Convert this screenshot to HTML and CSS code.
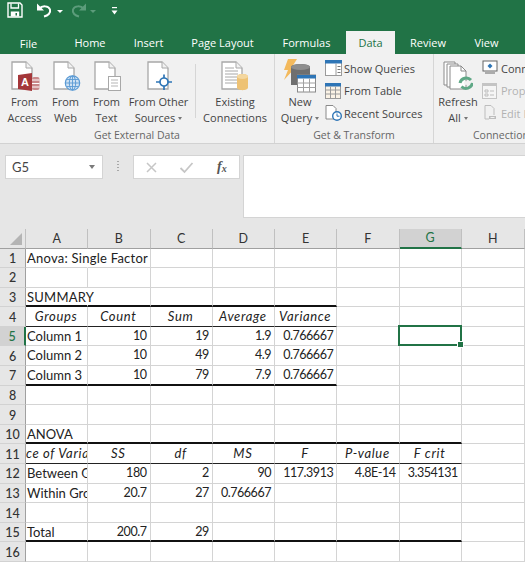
FILE: index.html
```html
<!DOCTYPE html>
<html lang="en">
<head>
<meta charset="utf-8">
<title>Anova: Single Factor</title>
<link rel="stylesheet" href="styles.css">
</head>
<body>
<div class="app">
<header class="top">
  <div class="qat">
    <svg class="q-save" width="16" height="16" viewBox="0 0 16 16"><path d="M1 1H13L15 3V15H1Z" fill="none" stroke="#fff" stroke-width="1.4"/><path d="M4 1.5V6H11.5V1.5" fill="none" stroke="#fff" stroke-width="1.3"/><rect x="3.8" y="9.5" width="8.4" height="5" fill="#fff"/><rect x="8.5" y="11" width="1.5" height="2.5" fill="#217346"/></svg>
    <svg class="q-undo" width="16" height="16" viewBox="0 0 16 16"><path d="M3.5 6.5C6 3.5 12.5 3.5 14 7.5C15 11 12 13.5 8 14.5" fill="none" stroke="#fff" stroke-width="2"/><path d="M1 1.5V8.5H8Z" fill="#fff"/></svg>
    <span class="q-caret"></span>
    <svg class="q-redo" width="16" height="16" viewBox="0 0 16 16"><path d="M12.5 6.5C10 3.5 3.5 3.5 2 7.5C1 11 4 13.5 8 14.5" fill="none" stroke="#5c9c7b" stroke-width="2"/><path d="M15 1.5V8.5H8Z" fill="#5c9c7b"/></svg>
    <span class="q-caret dim"></span>
    <svg class="q-more" width="7" height="8" viewBox="0 0 7 8"><rect x="1" y="0" width="5" height="1.2" fill="#fff"/><path d="M0.5 3.5H6.5L3.5 7.5Z" fill="#fff"/></svg>
  </div>
  <nav class="tabs">
    <span class="tab t-file">File</span>
    <span class="tab t-home">Home</span>
    <span class="tab t-insert">Insert</span>
    <span class="tab t-page">Page Layout</span>
    <span class="tab t-form">Formulas</span>
    <span class="tab t-data">Data</span>
    <span class="tab t-review">Review</span>
    <span class="tab t-view">View</span>
  </nav>
</header>

<section class="ribbon">
  <div class="group g-ext">
    <div class="items">
      <div class="big w41"><svg width="30" height="30" viewBox="0 0 30 30"><path d="M2 1H16L22 7V28H2Z" fill="#fff" stroke="#a8a8a8" stroke-width="1.3"/><path d="M16 1V7H22" fill="#f2f2f2" stroke="#a8a8a8"/><rect x="22" y="16" width="7.5" height="13" rx="2" fill="#c9888a"/><path d="M22 19H29.5M22 22.5H29.5M22 26H29.5" stroke="#fff" stroke-width="1"/><path d="M8 14L22 12V30L8 28Z" fill="#a4373a"/><text x="11" y="25" class="ic-a">A</text></svg><span class="lbl">From<br>Access</span></div>
      <div class="big w41"><svg width="30" height="30" viewBox="0 0 30 30"><path d="M3 1H17L23 7V28H3Z" fill="#fff" stroke="#a8a8a8" stroke-width="1.3"/><path d="M17 1V7H23" fill="#f2f2f2" stroke="#a8a8a8"/><circle cx="21.5" cy="22" r="7.2" fill="#cfe2f3" stroke="#5b9bd5" stroke-width="1.2"/><ellipse cx="21.5" cy="22" rx="3.2" ry="7" fill="none" stroke="#5b9bd5"/><path d="M14.5 22H28.5M15.5 18.5H27.5M15.5 25.5H27.5M21.5 15V29" stroke="#5b9bd5" stroke-width=".9"/></svg><span class="lbl">From<br>Web</span></div>
      <div class="big w41"><svg width="30" height="30" viewBox="0 0 30 30"><path d="M3 1H17L23 7V28H3Z" fill="#fff" stroke="#a8a8a8" stroke-width="1.3"/><path d="M17 1V7H23" fill="#f2f2f2" stroke="#a8a8a8"/><rect x="16.5" y="15.5" width="12" height="14" fill="#fff" stroke="#a8a8a8"/><path d="M19 19H26M19 22H26M19 25H26" stroke="#b5b5b5"/></svg><span class="lbl">From<br>Text</span></div>
      <div class="big w63"><svg width="30" height="30" viewBox="0 0 30 30"><path d="M4 1H18L24 7V28H4Z" fill="#fff" stroke="#a8a8a8" stroke-width="1.3"/><path d="M18 1V7H24" fill="#f2f2f2" stroke="#a8a8a8"/><circle cx="20" cy="21" r="4" fill="#fff" stroke="#2e75b6" stroke-width="1.7"/><path d="M20 13.5V17M20 25V29M12 21H16M24 21H28" stroke="#2e75b6" stroke-width="1.7"/></svg><span class="lbl">From Other<br>Sources<i class="caret"></i></span></div>
      <div class="vsep"></div>
      <div class="big w78"><svg width="30" height="30" viewBox="0 0 30 30"><path d="M2 1H16L22 7V28H2Z" fill="#fff" stroke="#a8a8a8" stroke-width="1.3"/><path d="M16 1V7H22" fill="#f2f2f2" stroke="#a8a8a8"/><path d="M5 7H14M5 10H18M5 13H18M5 16H18M5 19H18M5 22H18" stroke="#a8a8a8"/><path d="M17 15.5C17 12 28 12 28 15.5V26.5C28 30 17 30 17 26.5Z" fill="#eec274"/><ellipse cx="22.5" cy="15.5" rx="5.5" ry="2.5" fill="#f4d79f"/></svg><span class="lbl">Existing<br>Connections</span></div>
    </div>
    <div class="g-label">Get External Data</div>
  </div>
  <div class="group g-trans">
    <div class="items">
      <div class="big w50"><svg width="34" height="34" viewBox="0 0 34 34"><path d="M5 0H14L9 8H13L1 21L5 11H1Z" fill="#f3b95c"/><path d="M8 8C8 4 27 4 27 8V26H8Z" fill="#6f6f6f"/><ellipse cx="17.500" cy="8" rx="9.500" ry="3" fill="#8e8e8e"/><rect x="14.500" y="16" width="18" height="17" fill="#fff" stroke="#8a8a8a"/><rect x="14" y="16" width="19" height="3.500" fill="#2e75b6"/><path d="M20.500 19.500V33M26.500 19.500V33M14.500 24H32.500M14.500 28.500H32.500" stroke="#a0a0a0"/></svg><span class="lbl">New<br>Query<i class="caret"></i></span></div>
      <div class="slist">
        <div class="sm"><svg width="18" height="16" viewBox="0 0 18 16"><rect x=".5" y=".5" width="16" height="15" fill="#fff" stroke="#9a9a9a"/><rect x="0" y="0" width="17" height="3.500" fill="#2e75b6"/><path d="M11 3.500V15.500" stroke="#9a9a9a"/><path d="M12.500 6.500H15.500M12.500 9.500H15.500M12.500 12.500H15.500" stroke="#777"/></svg><span>Show Queries</span></div>
        <div class="sm"><svg width="18" height="16" viewBox="0 0 18 16"><rect x=".5" y=".5" width="15" height="15" fill="#fbf3e6" stroke="#9a9a9a"/><rect x="0" y="0" width="16" height="3.500" fill="#2e75b6"/><path d="M5.500 3.500V15.500M10.500 3.500V15.500M.5 7H15.500M.5 11H15.500" stroke="#9a9a9a"/></svg><span>From Table</span></div>
        <div class="sm"><svg width="18" height="16" viewBox="0 0 18 16"><path d="M1 .5H8L11 3.500V14H1Z" fill="#fff" stroke="#8a8a8a"/><circle cx="12" cy="11" r="4.300" fill="#fff" stroke="#2e75b6" stroke-width="1.400"/><path d="M12 8.500V11.200H14.500" fill="none" stroke="#2e75b6"/></svg><span>Recent Sources</span></div>
      </div>
    </div>
    <div class="g-label">Get &amp; Transform</div>
  </div>
  <div class="group g-conn">
    <div class="items">
      <div class="big w50"><svg width="30" height="30" viewBox="0 0 30 30"><path d="M1 1H12V24H1Z" fill="#fff" stroke="#8a8a8a"/><path d="M4 3H15V26H4Z" fill="#fff" stroke="#8a8a8a"/><path d="M7 5H18L23 10V28H7Z" fill="#fff" stroke="#8a8a8a"/><path d="M18 5V10H23" fill="none" stroke="#8a8a8a"/><path d="M17 22A6.500 6.500 0 0 1 28 19" fill="none" stroke="#5fa886" stroke-width="3"/><path d="M29.500 22A6.500 6.500 0 0 1 18.500 25.500" fill="none" stroke="#5fa886" stroke-width="3"/><circle cx="23" cy="22" r="2" fill="#f1f1f1"/></svg><span class="lbl">Refresh<br>All<i class="caret"></i></span></div>
      <div class="slist conn">
        <div class="sm"><svg width="16" height="16" viewBox="0 0 16 16"><rect x="1" y="1" width="14" height="10" fill="#fff" stroke="#666"/><path d="M8 3.500L10.500 6L8 8.500L5.500 6Z" fill="#2e75b6"/><path d="M3 13H13" stroke="#666"/></svg><span>Connections</span></div>
        <div class="sm off"><svg width="16" height="16" viewBox="0 0 16 16"><rect x=".5" y=".5" width="14" height="15" fill="#f5f5f5" stroke="#c4c4c4"/><rect x="0" y="0" width="15" height="3" fill="#c4c4c4"/><path d="M3 7H6V9H3ZM3 11H6V13H3ZM8 8H12M8 12H12" fill="none" stroke="#bdbdbd"/></svg><span>Properties</span></div>
        <div class="sm off"><svg width="16" height="16" viewBox="0 0 16 16"><path d="M3 .5H9L12 3.500V10M3 .5V14H7" fill="none" stroke="#bdbdbd"/><path d="M7 12.500H14" stroke="#bdbdbd" stroke-width="3"/><path d="M8.500 12.500H12.500" stroke="#f1f1f1"/></svg><span>Edit Links</span></div>
      </div>
    </div>
    <div class="g-label">Connections</div>
  </div>
</section>

<section class="formula">
  <div class="namebox"><span>G5</span><i class="nb-caret"></i></div>
  <div class="dots"></div>
  <div class="fxbox">
    <svg width="13" height="13" viewBox="0 0 13 13"><path d="M2 2L11 11M11 2L2 11" stroke="#c6c6c6" stroke-width="1.500"/></svg>
    <svg width="15" height="13" viewBox="0 0 15 13"><path d="M1.500 7L5.500 11L13.500 2" fill="none" stroke="#c6c6c6" stroke-width="1.800"/></svg>
    <span class="fx">f<sub>x</sub></span>
  </div>
  <div class="finput"></div>
</section>

<main class="sheet">
  <div class="ch corner"><i></i></div><div class="ch">A</div><div class="ch">B</div><div class="ch">C</div><div class="ch">D</div><div class="ch">E</div><div class="ch">F</div><div class="ch on">G</div><div class="ch">H</div>

  <div class="rh">1</div><div class="c over">Anova: Single Factor</div><div class="c"></div><div class="c"></div><div class="c"></div><div class="c"></div><div class="c"></div><div class="c"></div><div class="c"></div>
  <div class="rh">2</div><div class="c"></div><div class="c"></div><div class="c"></div><div class="c"></div><div class="c"></div><div class="c"></div><div class="c"></div><div class="c"></div>
  <div class="rh">3</div><div class="c bb over">SUMMARY</div><div class="c bb"></div><div class="c bb"></div><div class="c bb"></div><div class="c bb"></div><div class="c"></div><div class="c"></div><div class="c"></div>
  <div class="rh">4</div><div class="c h bm">Groups</div><div class="c h bm">Count</div><div class="c h bm">Sum</div><div class="c h bm">Average</div><div class="c h bm">Variance</div><div class="c"></div><div class="c"></div><div class="c"></div>
  <div class="rh on">5</div><div class="c">Column 1</div><div class="c n">10</div><div class="c n">19</div><div class="c n">1.9</div><div class="c n">0.766667</div><div class="c"></div><div class="c sel"></div><div class="c"></div>
  <div class="rh">6</div><div class="c">Column 2</div><div class="c n">10</div><div class="c n">49</div><div class="c n">4.9</div><div class="c n">0.766667</div><div class="c"></div><div class="c"></div><div class="c"></div>
  <div class="rh">7</div><div class="c bb">Column 3</div><div class="c n bb">10</div><div class="c n bb">79</div><div class="c n bb">7.9</div><div class="c n bb">0.766667</div><div class="c"></div><div class="c"></div><div class="c"></div>
  <div class="rh">8</div><div class="c"></div><div class="c"></div><div class="c"></div><div class="c"></div><div class="c"></div><div class="c"></div><div class="c"></div><div class="c"></div>
  <div class="rh">9</div><div class="c"></div><div class="c"></div><div class="c"></div><div class="c"></div><div class="c"></div><div class="c"></div><div class="c"></div><div class="c"></div>
  <div class="rh">10</div><div class="c bb">ANOVA</div><div class="c bb"></div><div class="c bb"></div><div class="c bb"></div><div class="c bb"></div><div class="c bb"></div><div class="c bb"></div><div class="c"></div>
  <div class="rh">11</div><div class="c h bm"><span>Source of Variation</span></div><div class="c h bm">SS</div><div class="c h bm">df</div><div class="c h bm">MS</div><div class="c h bm">F</div><div class="c h bm">P-value</div><div class="c h bm">F crit</div><div class="c"></div>
  <div class="rh">12</div><div class="c">Between Groups</div><div class="c n">180</div><div class="c n">2</div><div class="c n">90</div><div class="c n">117.3913</div><div class="c n">4.8E-14</div><div class="c n">3.354131</div><div class="c"></div>
  <div class="rh">13</div><div class="c">Within Groups</div><div class="c n">20.7</div><div class="c n">27</div><div class="c n">0.766667</div><div class="c"></div><div class="c"></div><div class="c"></div><div class="c"></div>
  <div class="rh">14</div><div class="c"></div><div class="c"></div><div class="c"></div><div class="c"></div><div class="c"></div><div class="c"></div><div class="c"></div><div class="c"></div>
  <div class="rh">15</div><div class="c bb">Total</div><div class="c n bb">200.7</div><div class="c n bb">29</div><div class="c bb"></div><div class="c bb"></div><div class="c bb"></div><div class="c bb"></div><div class="c"></div>
  <div class="rh">16</div><div class="c"></div><div class="c"></div><div class="c"></div><div class="c"></div><div class="c"></div><div class="c"></div><div class="c"></div><div class="c"></div>
</main>
</div>
</body>
</html>
```

FILE: styles.css
```css
* { box-sizing: border-box; }
html, body { margin: 0; padding: 0; }
body { width: 525px; height: 563px; overflow: hidden; background: #fff; font-family: "Open Sans", "Noto Sans", sans-serif; }
.app { width: 525px; height: 563px; overflow: hidden; }

.top { height: 54px; background: #217346; }
.qat { height: 31px; display: flex; align-items: flex-start; padding: 2px 0 0 7px; }
.qat svg { flex: none; }
.q-undo { margin-left: 13px; }
.q-caret { width: 0; height: 0; margin: 8px 0 0 5px; border: 3px solid transparent; border-top: 3px solid #fff; border-bottom: 0; }
.q-caret.dim { border-top-color: #5c9c7b; margin-left: 3px; }
.q-redo { margin-left: 8px; }
.q-more { margin: 5px 0 0 15px; }
.tabs { height: 23px; display: flex; }
.tab { color: #fff; font-size: 11px; line-height: 23px; text-align: center; flex: none; }
.t-file { width: 57px; padding-top: 1px; }
.t-home { width: 66px; }
.t-insert { width: 51px; }
.t-page { width: 97px; }
.t-form { width: 71px; margin-right: 4px; }
.t-data { width: 49px; background: #f1f1f1; color: #217346; }
.t-review { width: 66px; }
.t-view { width: 51px; }

.ribbon { height: 90px; background: #f1f1f1; border-bottom: 1px solid #d2d2d2; display: flex; overflow: hidden; }
.group { flex: none; display: flex; flex-direction: column; position: relative; }
.g-ext { width: 275px; border-right: 1px solid #d6d6d6; padding-left: 4px; }
.g-trans { width: 159px; border-right: 1px solid #d6d6d6; }
.g-conn { width: 140px; }
.items { display: flex; height: 74px; }
.g-label { font-size: 10.5px; line-height: 14px; color: #666; text-align: center; }
.g-ext .g-label { margin-left: -4px; }
.g-conn .g-label { text-align: left; padding-left: 39px; }
.big { flex: none; display: flex; flex-direction: column; align-items: center; padding-top: 7px; }
.big svg { height: 30px; flex: none; }
.lbl { font-size: 11px; line-height: 16px; color: #444; text-align: center; white-space: nowrap; margin-top: 3px; }
.ic-a { font-family: "Liberation Sans", sans-serif; font-size: 11px; font-weight: 700; fill: #fff; }
.w41 { width: 41px; }
.w50 { width: 50px; }
.w63 { width: 63px; }
.w78 { width: 78px; }
.g-trans .big svg { height: 34px; margin: -2px 0 0 0; width: 34px; }
.g-trans .lbl { margin-top: 1px; }
.g-conn .big { margin-left: -1px; width: 50px; }
.vsep { width: 1px; height: 54px; margin: 10px 0 0 5px; background: #d6d6d6; flex: none; }
.caret { display: inline-block; width: 0; height: 0; margin: 0 0 2px 3px; border: 2.5px solid transparent; border-top: 3px solid #777; border-bottom: 0; }
.slist { display: flex; flex-direction: column; padding-top: 6px; gap: 6.5px; }
.sm { display: flex; align-items: center; height: 16px; font-size: 11px; color: #444; white-space: nowrap; gap: 1px; }
.sm svg { flex: none; }
.sm.off { color: #b2b2b2; }
.conn { margin-left: -1px; }
.conn .sm { gap: 3px; }

.formula { height: 85px; background: #e6e6e6; display: flex; align-items: flex-start; padding: 11px 0 0 5px; }
.namebox { width: 98px; height: 24px; background: #fff; border: 1px solid #d4d4d4; display: flex; align-items: center; justify-content: space-between; padding: 0 7px 0 6px; font-family: "Lato", sans-serif; font-size: 13px; color: #444; }
.nb-caret { width: 0; height: 0; border: 3.500px solid transparent; border-top: 4px solid #7a7a7a; border-bottom: 0; }
.dots { width: 2px; height: 11px; margin: 6px 14px 0 14px; background-image: linear-gradient(#a8a8a8 50%, transparent 50%); background-size: 2px 3px; flex: none; }
.fxbox { width: 107px; height: 24px; background: #fff; border: 1px solid #d4d4d4; display: flex; align-items: center; padding-left: 11px; gap: 21px; }
.fx { font-family: "Liberation Serif", serif; font-style: italic; font-weight: 700; font-size: 14px; color: #555; margin-left: 2px; line-height: 16px; }
.fx sub { font-size: 10px; vertical-align: -1px; line-height: 0; }
.finput { flex: 1; height: 63px; margin-left: 3px; background: #fff; border: 1px solid #d4d4d4; border-right: 0; }

.sheet { display: grid; grid-template-columns: 26px repeat(7, 62.25px) 63.25px; grid-template-rows: 19.5px repeat(16, 19.6px); font-family: "Lato", "Liberation Sans", sans-serif; font-size: 13px; color: #222; }
.ch, .rh { background: #e6e6e6; color: #333; text-align: center; display: flex; align-items: center; justify-content: center; font-size: 12.500px; }
.ch { border-right: 1px solid #c0c0c0; border-bottom: 1px solid #a0a0a0; }
.rh { border-right: 1px solid #a0a0a0; border-bottom: 1px solid #d2d2d2; font-weight: 500; padding-top: 1px; }
.ch.on { background: #d2d2d2; color: #217346; border-bottom: 2px solid #217346; }
.rh.on { background: #d2d2d2; color: #217346; border-right: 2px solid #217346; }
.corner { position: relative; }
.corner i { position: absolute; left: 10px; top: 4px; width: 12px; height: 12px; background: #b4b4b4; clip-path: polygon(100% 0, 100% 100%, 0 100%); }
.c { border-right: 1px solid #d4d4d4; border-bottom: 1px solid #d4d4d4; padding: 0 2px 0 1px; line-height: 18.5px; white-space: nowrap; overflow: hidden; }
.c.over { overflow: visible; border-right-color: transparent; letter-spacing: .25px; }
.n { text-align: right; padding-right: 3px; font-size: 12.5px; letter-spacing: -.45px; }
.h { font-style: italic; display: flex; justify-content: center; letter-spacing: .65px; }
.h span { flex: none; }
.bb { border-bottom: 2px solid #111; }
.bm { border-bottom: 1px solid #222; }
.sel { position: relative; overflow: visible; }
.sel::after { content: ""; position: absolute; left: -2px; top: -2px; right: -1px; bottom: -1px; border: 2px solid #217346; }
.sel::before { content: ""; position: absolute; right: -3px; bottom: -3px; width: 5px; height: 5px; background: #217346; border: 1px solid #fff; z-index: 1; box-sizing: content-box; }
```
